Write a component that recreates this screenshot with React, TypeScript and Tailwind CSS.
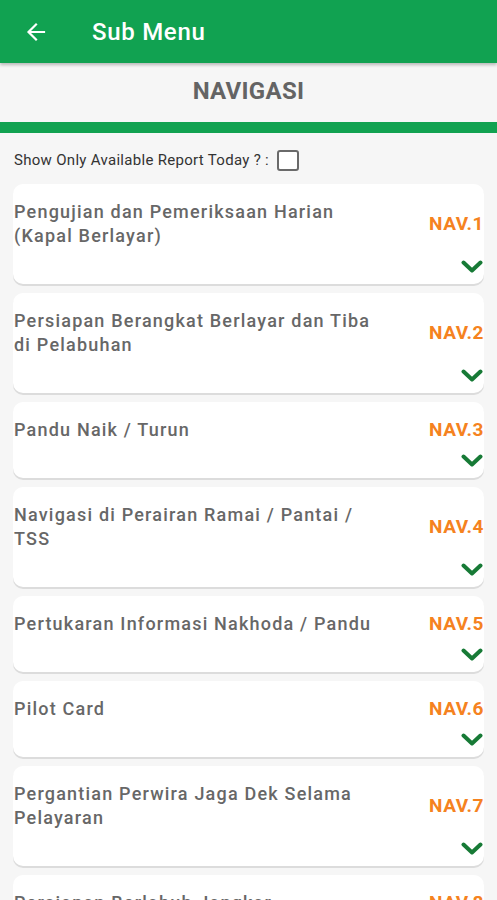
import React from "react";

const items: { title: string; code: string }[] = [
  { title: "Pengujian dan Pemeriksaan Harian (Kapal Berlayar)", code: "NAV.1" },
  { title: "Persiapan Berangkat Berlayar dan Tiba di Pelabuhan", code: "NAV.2" },
  { title: "Pandu Naik / Turun", code: "NAV.3" },
  { title: "Navigasi di Perairan Ramai / Pantai / TSS", code: "NAV.4" },
  { title: "Pertukaran Informasi Nakhoda / Pandu", code: "NAV.5" },
  { title: "Pilot Card", code: "NAV.6" },
  { title: "Pergantian Perwira Jaga Dek Selama Pelayaran", code: "NAV.7" },
  { title: "Persiapan Berlabuh Jangkar", code: "NAV.8" },
];

function Chevron() {
  return (
    <svg width="22" height="14" viewBox="0 0 22 14" fill="none">
      <polyline
        points="2.5,2.5 11,10.5 19.5,2.5"
        stroke="#177a36"
        strokeWidth="4"
        strokeLinecap="round"
        strokeLinejoin="round"
      />
    </svg>
  );
}

export default function App() {
  return (
    <div
      className="w-[497px] h-[900px] overflow-hidden bg-[#f6f6f6]"
      style={{ fontFamily: "Roboto, 'Noto Sans', sans-serif" }}
    >
      <div className="relative z-10 h-[63px] bg-[#11a251] flex items-center shadow-[0_2px_3px_rgba(0,0,0,0.25)]">
        <svg className="ml-[24px]" width="24" height="24" viewBox="0 0 24 24" fill="none">
          <path
            d="M20 12H5M12 4.5L4.5 12L12 19.5"
            stroke="white"
            strokeWidth="2.2"
            strokeLinecap="square"
          />
        </svg>
        <span className="ml-[44px] text-white text-[24px] font-medium tracking-[0.7px]">Sub Menu</span>
      </div>
      <div className="h-[59px] flex items-center justify-center bg-[#f6f6f6] pb-[4px]">
        <span className="text-[#646464] text-[24px] font-bold tracking-[0.3px]">NAVIGASI</span>
      </div>
      <div className="h-[11px] bg-[#11a251]" />
      <div className="h-[51px] flex items-center pl-[14px] pt-[4px]">
        <span className="text-[#333] text-[15px] tracking-[0.3px]">Show Only Available Report Today ? :</span>
        <div className="ml-[8px] w-[22px] h-[21px] border-2 border-[#6a6a6a] rounded-[3px] bg-white" />
      </div>
      <div className="flex flex-col gap-[9px] px-[13px]">
        {items.map((it) => (
          <div
            key={it.code}
            className="bg-white rounded-[10px] shadow-[0_2px_0_#dcdcdc] pt-[16px] pl-[1px]"
          >
            <div className="flex items-center">
              <div className="w-[370px] text-[18px] leading-[24px] font-medium tracking-[1.2px] text-[#676767]">
                {it.title}
              </div>
              <div className="flex-1 text-right text-[19px] leading-[24px] font-bold tracking-[0.5px] text-[#f58220]">
                {it.code}
              </div>
            </div>
            <div className="flex justify-end pt-[12px] pb-[10px] pr-[1px]">
              <Chevron />
            </div>
          </div>
        ))}
      </div>
    </div>
  );
}
